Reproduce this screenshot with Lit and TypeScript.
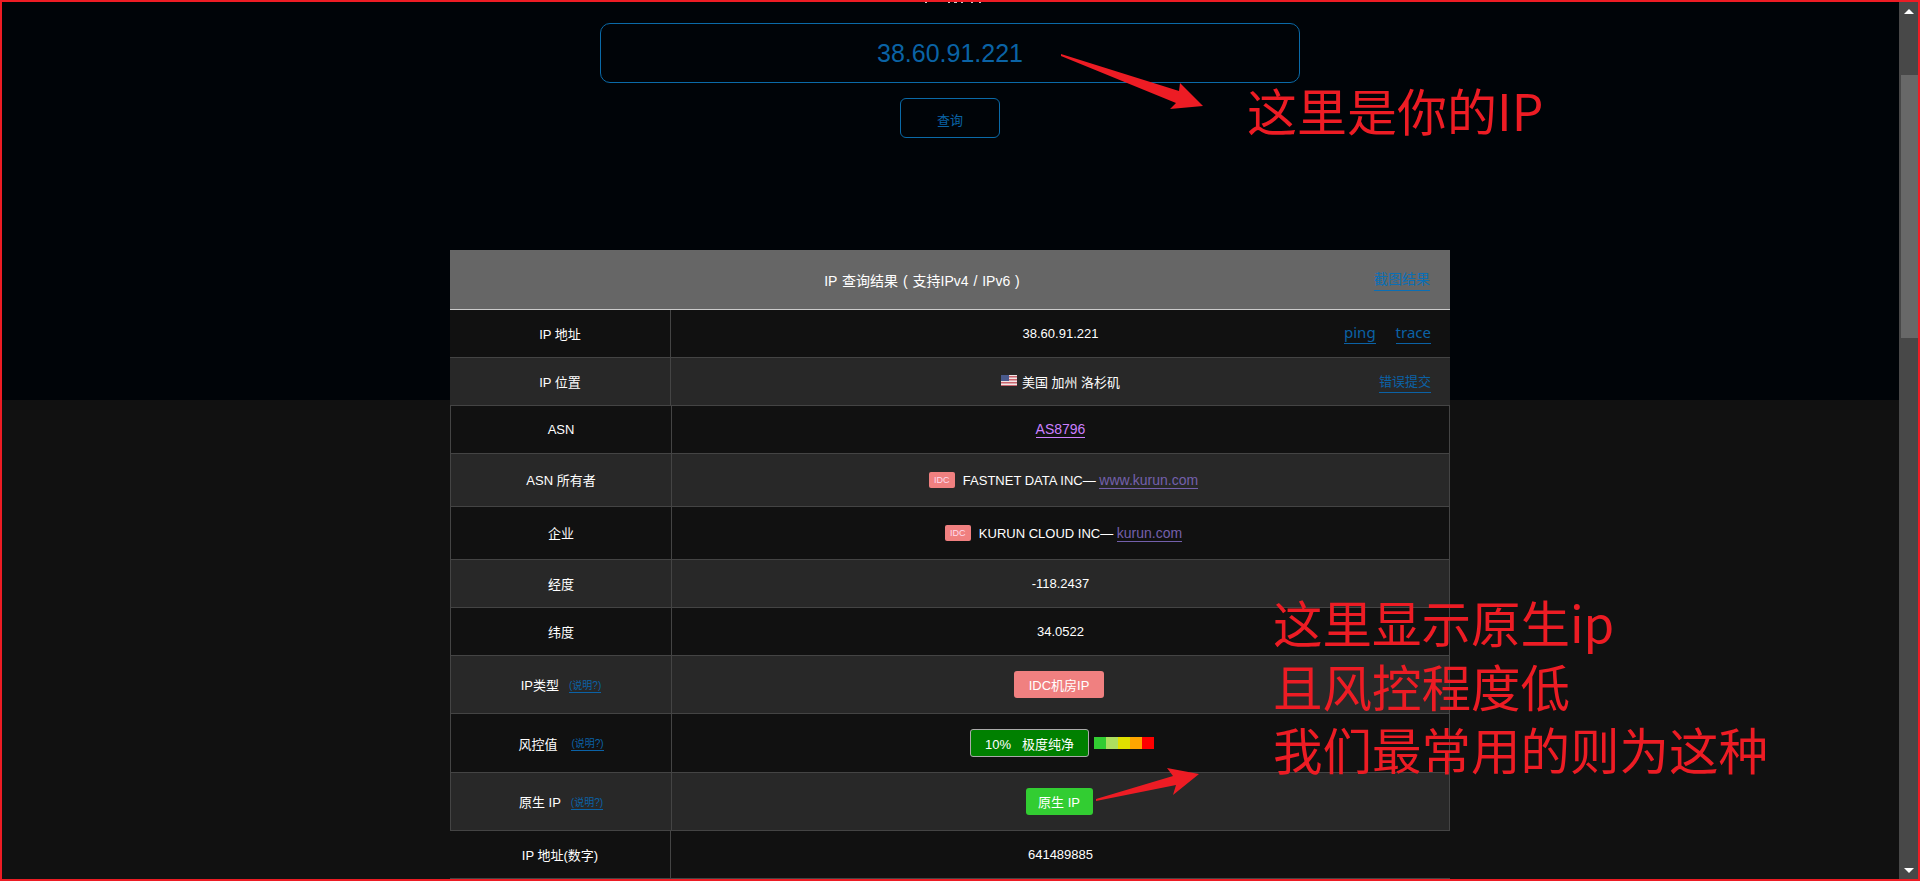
import { LitElement, html, css } from "lit";
import { customElement } from "lit/decorators.js";

@customElement("app-root")
export class AppRoot extends LitElement {
  static styles = css`
    :host {
      display: block;
      font-family: "Liberation Sans", "Noto Sans CJK SC", sans-serif;
      font-size: 13px;
      color: #fff;
    }
    * { box-sizing: border-box; }
    .frame {
      position: relative;
      width: 1920px;
      height: 881px;
      border: 2px solid #ed1c24;
      display: flex;
      overflow: hidden;
    }
    .page {
      flex: 1;
      min-width: 0;
      padding-right: 1px;
      display: flex;
      flex-direction: column;
      align-items: center;
      background: linear-gradient(#000408 398px, #111 398px);
    }
    .specks {
      width: 60px;
      height: 1px;
      margin: 0 0 20px 8px;
      background:
        linear-gradient(#ccc, #ccc) 1px 0 / 2px 1px no-repeat,
        linear-gradient(#ccc, #ccc) 24px 0 / 2px 1px no-repeat,
        linear-gradient(#ccc, #ccc) 30px 0 / 3px 1px no-repeat,
        linear-gradient(#ccc, #ccc) 37px 0 / 2px 1px no-repeat,
        linear-gradient(#ccc, #ccc) 47px 0 / 2px 1px no-repeat,
        linear-gradient(#ccc, #ccc) 55px 0 / 2px 1px no-repeat;
    }
    .ipbox {
      width: 700px;
      height: 60px;
      border: 1px solid #0a6aa8;
      border-radius: 10px;
      display: flex;
      align-items: center;
      justify-content: center;
      color: #0a63a5;
      font-size: 25px;
    }
    .query {
      width: 100px;
      height: 40px;
      margin-top: 15px;
      border: 1px solid #0a6aa8;
      border-radius: 6px;
      background: transparent;
      color: #0a63a5;
      font: inherit;
      padding: 3px 0 0;
    }
    .results {
      width: 1000px;
      margin-top: 112px;
    }
    .head {
      height: 60px;
      background: #666;
      border-bottom: 1px solid #ccc;
      padding: 0 20px;
      display: flex;
      align-items: center;
      font-size: 14px;
    }
    .head .title { flex: 1; text-align: center; word-spacing: 1px; }
    a {
      color: #0b62a6;
      text-decoration: none;
      border-bottom: 1px solid currentColor;
      padding-bottom: 2px;
    }
    .head a { color: #0b6fb5; }
    .group.boxed { border-left: 1px solid #444; border-right: 1px solid #444; }
    .row {
      display: grid;
      grid-template-columns: 220px 1fr;
      background: #111;
      border-bottom: 1px solid #444;
    }
    .row.alt { background: #282828; }
    .h48 { height: 48px; }
    .h53 { height: 53px; }
    .h53 .key { padding-bottom: 2px; }
    .h58 { height: 58px; }
    .h59 { height: 59px; }
    .key {
      display: flex;
      align-items: center;
      justify-content: center;
    }
    .help {
      font-size: 10px;
      margin-left: 10px;
      padding-bottom: 0;
    }
    .help.wide { margin-left: 14px; }
    .val {
      border-left: 1px solid #444;
      display: grid;
      grid-template-columns: 1fr auto 1fr;
      align-items: center;
      padding-right: 19px;
      padding-left: 19px;
    }
    .center {
      grid-column: 2;
      display: flex;
      align-items: center;
      white-space: pre;
    }
    .center.tagged { margin-left: 6px; }
    .center.scaled { margin-left: 3px; }
    .side {
      grid-column: 3;
      justify-self: end;
      display: flex;
      gap: 20px;
    }
    .side a.en {
      font-family: "Noto Sans", sans-serif;
      font-size: 15px;
      line-height: 19px;
      padding-bottom: 1px;
    }
    .flag { width: 16px; height: 11px; margin-right: 5px; margin-top: -2px; }
    .asn { color: #cc80ff; font-size: 14px; padding-bottom: 0; }
    .site { color: #7460ac; font-size: 14px; padding-bottom: 0; }
    .tag {
      width: 26px;
      height: 16px;
      margin-right: 8px;
      background: #f08080;
      border-radius: 2px;
      color: #fde;
      font-size: 9px;
      display: flex;
      align-items: center;
      justify-content: center;
    }
    .badge {
      height: 27px;
      display: flex;
      align-items: center;
      justify-content: center;
      border-radius: 3px;
      color: #fff;
    }
    .idc { width: 90px; background: #f08080; margin-left: -3px; }
    .risk {
      width: 119px;
      height: 28px;
      background: #008000;
      border: 1px solid #aaa;
      white-space: pre;
    }
    .native { width: 67px; background: #32cd32; margin-left: -3px; }
    .scale { display: flex; margin-left: 5px; }
    .scale i { display: block; width: 12px; height: 12px; }
    .s1 { background: #32cd32; }
    .s2 { background: #addf5f; }
    .s3 { background: #e0e000; }
    .s4 { background: #ffa500; }
    .s5 { background: #f00; }
    .scroll {
      width: 19px;
      flex: none;
      background: #484848;
      display: flex;
      flex-direction: column;
      align-items: flex-end;
    }
    .btn {
      width: 19px;
      height: 18px;
      display: flex;
      align-items: center;
      justify-content: center;
      flex: none;
    }
    .up {
      width: 0;
      height: 0;
      border-left: 5px solid transparent;
      border-right: 5px solid transparent;
      border-bottom: 5px solid #fff;
    }
    .down {
      width: 0;
      height: 0;
      border-left: 5px solid transparent;
      border-right: 5px solid transparent;
      border-top: 5px solid #fff;
    }
    .thumb {
      width: 17px;
      height: 263px;
      margin-top: 55px;
      background: #686868;
      flex: none;
    }
    .grow { flex: 1; }
    .arrows {
      position: absolute;
      left: 0;
      top: 0;
      width: 1916px;
      height: 877px;
      pointer-events: none;
    }
    .note {
      position: absolute;
      color: #ed1c24;
      font-family: "Noto Sans CJK SC", sans-serif;
      font-size: 50px;
      line-height: 63.5px;
      white-space: nowrap;
    }
    .note.a { left: 1245px; top: 76px; }
    .note.b { left: 1271px; top: 588px; font-size: 49.5px; }
  `;

  private help(wide = false) {
    return html`<a class="help ${wide ? "wide" : ""}">(说明?)</a>`;
  }

  render() {
    return html`
      <div class="frame">
        <div class="page">
          <div class="specks"></div>
          <div class="ipbox">38.60.91.221</div>
          <button class="query">查询</button>
          <div class="results">
            <div class="head">
              <div class="title">IP 查询结果 ( 支持IPv4 / IPv6 )</div>
              <a>截图结果</a>
            </div>
            <div class="group">
              <div class="row h48">
                <div class="key">IP 地址</div>
                <div class="val">
                  <div class="center">38.60.91.221</div>
                  <div class="side"><a class="en">ping</a><a class="en">trace</a></div>
                </div>
              </div>
              <div class="row alt h48">
                <div class="key">IP 位置</div>
                <div class="val">
                  <div class="center"><svg class="flag" viewBox="0 0 16 11">
                      <rect width="16" height="11" fill="#f2e6e6" />
                      <path d="M0 1h16v1.5H0zM0 4h16v1.5H0zM0 7h16v1.5H0zM0 10h16v1H0z" fill="#c9656e" />
                      <rect width="8" height="6" fill="#4a5a8c" />
                    </svg><span>美国 加州 洛杉矶</span></div>
                  <div class="side"><a>错误提交</a></div>
                </div>
              </div>
            </div>
            <div class="group boxed">
              <div class="row h48">
                <div class="key">ASN</div>
                <div class="val"><div class="center"><a class="asn">AS8796</a></div></div>
              </div>
              <div class="row alt h53">
                <div class="key">ASN 所有者</div>
                <div class="val">
                  <div class="center tagged"><span class="tag">IDC</span><span>FASTNET DATA INC— </span><a class="site">www.kurun.com</a></div>
                </div>
              </div>
              <div class="row h53">
                <div class="key">企业</div>
                <div class="val">
                  <div class="center tagged"><span class="tag">IDC</span><span>KURUN CLOUD INC— </span><a class="site">kurun.com</a></div>
                </div>
              </div>
              <div class="row alt h48">
                <div class="key">经度</div>
                <div class="val"><div class="center">-118.2437</div></div>
              </div>
              <div class="row h48">
                <div class="key">纬度</div>
                <div class="val"><div class="center">34.0522</div></div>
              </div>
              <div class="row alt h58">
                <div class="key">IP类型${this.help()}</div>
                <div class="val"><div class="center"><span class="badge idc">IDC机房IP</span></div></div>
              </div>
              <div class="row h59">
                <div class="key">风控值${this.help(true)}</div>
                <div class="val">
                  <div class="center scaled"><span class="badge risk">10%   极度纯净</span><span class="scale"><i class="s1"></i><i class="s2"></i><i class="s3"></i><i class="s4"></i><i class="s5"></i></span></div>
                </div>
              </div>
              <div class="row alt h58">
                <div class="key">原生 IP${this.help()}</div>
                <div class="val"><div class="center"><span class="badge native">原生 IP</span></div></div>
              </div>
            </div>
            <div class="group">
              <div class="row h48">
                <div class="key">IP 地址(数字)</div>
                <div class="val"><div class="center">641489885</div></div>
              </div>
            </div>
          </div>
        </div>
        <div class="scroll">
          <div class="btn"><div class="up"></div></div>
          <div class="thumb"></div>
          <div class="grow"></div>
          <div class="btn"><div class="down"></div></div>
        </div>
        <svg class="arrows" viewBox="2 2 1916 877">
          <polygon points="1061,54 1179,91 1180,83 1203,106 1170,109 1176,103 1061,56" fill="#ed1c24" />
          <polygon points="1096,799 1173,776 1167,768 1199,774 1173,795 1176,785 1096,801" fill="#ed1c24" />
        </svg>
        <div class="note a">这里是你的IP</div>
        <div class="note b">这里显示原生ip<br />且风控程度低<br />我们最常用的则为这种</div>
      </div>
    `;
  }
}
